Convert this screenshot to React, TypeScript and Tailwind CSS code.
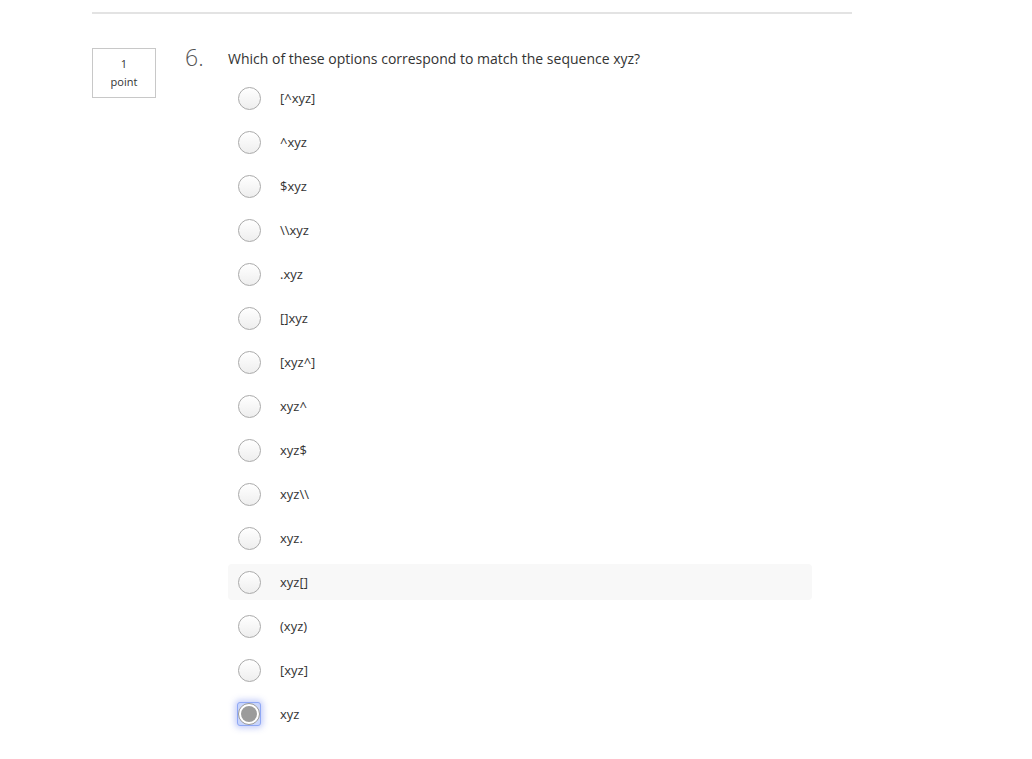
import React from 'react'

const options = [
  '[^xyz]',
  '^xyz',
  '$xyz',
  '\\\\xyz',
  '.xyz',
  '[]xyz',
  '[xyz^]',
  'xyz^',
  'xyz$',
  'xyz\\\\',
  'xyz.',
  'xyz[]',
  '(xyz)',
  '[xyz]',
  'xyz',
]

const hovered = 11
const selected = 14

function Radio({ checked }: { checked: boolean }) {
  if (checked) {
    return (
      <span className="relative flex h-[24px] w-[24px] items-center justify-center rounded-[3px] border border-[#8fa8f5] bg-[#c9d5fb] shadow-[0_0_6px_2px_rgba(120,140,240,0.45)]">
        <span className="flex h-[22px] w-[22px] items-center justify-center rounded-full border border-[#9a9a9a] bg-white">
          <span className="h-[16px] w-[16px] rounded-full bg-[#9b9b9b]" />
        </span>
      </span>
    )
  }
  return (
    <span className="flex h-[24px] w-[24px] items-center justify-center">
      <span className="h-[23px] w-[23px] rounded-full border border-[#aaaaaa] bg-gradient-to-b from-white to-[#eeeeee]" />
    </span>
  )
}

export default function App() {
  return (
    <div className="min-h-screen bg-white font-['Open_Sans','Liberation_Sans',sans-serif] text-[#333]">
      <div className="ml-[92px] w-[760px] pt-[12px]">
        <div className="h-[2px] bg-[#e3e3e3]" />

        <div className="mt-[31px] flex">
          {/* points box */}
          <div className="w-[93px] shrink-0 pt-[3px]">
            <div className="flex h-[50px] w-[64px] flex-col items-center justify-center border border-[#c8c8c8] text-[11px] leading-[18px]">
              <span>1</span>
              <span>point</span>
            </div>
          </div>

          <div className="flex-1">
            <div className="flex items-start">
              <span className="w-[43px] text-[23px] font-light leading-[24px] text-[#555]">6.</span>
              <p className="pt-[4px] text-[14px] leading-[20px]">
                Which of these options correspond to match the sequence xyz?
              </p>
            </div>

            <ul className="mt-[11px] flex w-[627px] flex-col gap-[8px] pl-[43px]">
              {options.map((opt, i) => (
                <li
                  key={i}
                  className={
                    'flex h-[36px] items-center gap-[19px] rounded-[4px] pl-[9px] ' +
                    (i === hovered ? 'bg-[#f8f8f8]' : '')
                  }
                >
                  <Radio checked={i === selected} />
                  <span className="text-[13px] leading-[18px]">{opt}</span>
                </li>
              ))}
            </ul>
          </div>
        </div>
      </div>
    </div>
  )
}
